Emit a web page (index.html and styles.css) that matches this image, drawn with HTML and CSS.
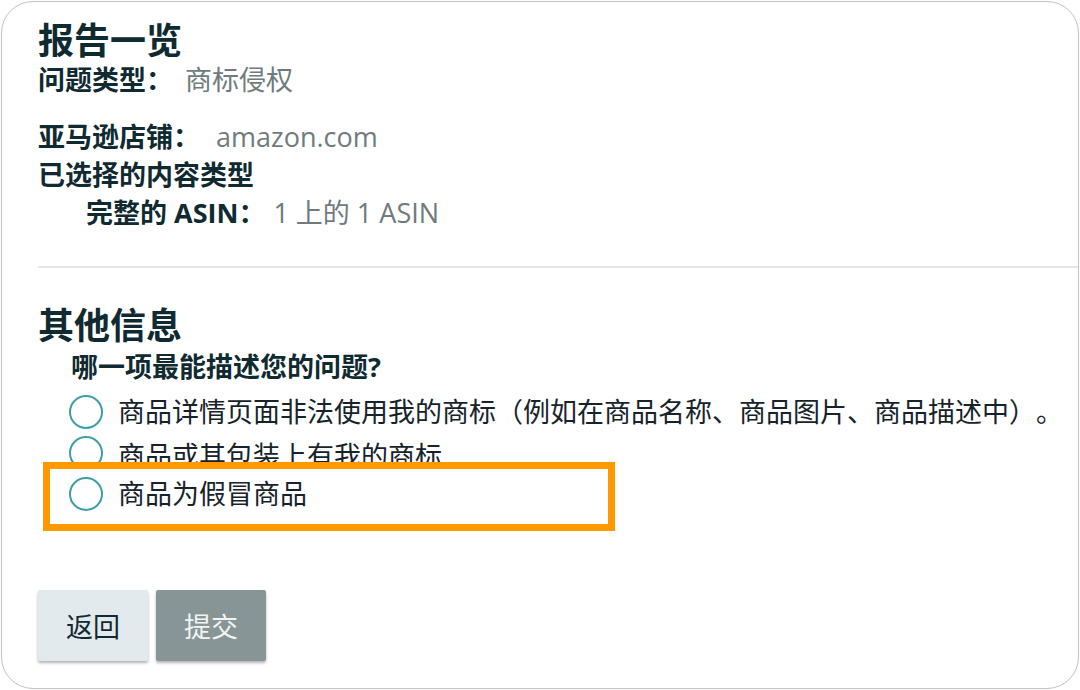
FILE: index.html
```html
<!DOCTYPE html>
<html lang="zh-CN">
<head>
<meta charset="utf-8">
<title>报告一览</title>
<link rel="stylesheet" href="styles.css">
</head>
<body>
<div class="frame">
  <h1 class="title">报告一览</h1>
  <div class="field"><span class="label">问题类型：</span><span class="value v1">商标侵权</span></div>
  <div class="field gap-top"><span class="label">亚马逊店铺：</span><span class="value v2">amazon.com</span></div>
  <div class="field"><span class="label">已选择的内容类型</span></div>
  <div class="field indent"><span class="label">完整的 ASIN：</span><span class="value v3">1 上的 1 ASIN</span></div>

  <div class="divider"></div>

  <h1 class="title title2">其他信息</h1>
  <div class="question">哪一项最能描述您的问题?</div>
  <div class="option first"><span class="radio"></span><span class="opt-text">商品详情页面非法使用我的商标（例如在商品名称、商品图片、商品描述中）。</span></div>
  <div class="option second"><span class="radio"></span><span class="opt-text">商品或其包装上有我的商标.</span></div>
  <div class="highlight">
    <div class="option"><span class="radio"></span><span class="opt-text">商品为假冒商品</span></div>
  </div>

  <div class="buttons">
    <button class="btn btn-back">返回</button>
    <button class="btn btn-submit">提交</button>
  </div>
</div>
</body>
</html>
```

FILE: styles.css
```css
html, body {
  margin: 0;
  padding: 0;
  background: #ffffff;
}

body {
  font-family: "Open Sans", "Noto Sans CJK SC", sans-serif;
  color: #0f2a30;
  text-spacing-trim: space-all;
}

.frame {
  margin: 1px;
  height: 688px;
  box-sizing: border-box;
  border: 1.5px solid #c2c2c2;
  border-radius: 32px;
  padding: 19px 0 0 36px;
  overflow: hidden;
  background: #ffffff;
}

.title {
  margin: 0;
  font-size: 36px;
  line-height: 40px;
  font-weight: 700;
  color: #0f2a30;
}

.title2 {
  margin-top: 38px;
}

.field {
  display: flex;
  align-items: center;
  height: 38px;
  font-size: 27px;
  line-height: 38px;
}

.gap-top {
  margin-top: 19px;
}

.indent {
  padding-left: 48px;
}

.label {
  font-weight: 700;
  color: #0f2a30;
}

.value {
  color: #6f7b7d;
  font-weight: 400;
}

.v1 { margin-left: 12px; }
.v2 { margin-left: 16px; }
.v3 { margin-left: 8px; }

.divider {
  margin-top: 34px;
  height: 2px;
  background: #e6e6e6;
}

.question {
  margin-top: 2px;
  padding-left: 33px;
  font-size: 27px;
  line-height: 38px;
  font-weight: 700;
  color: #0f2a30;
}

.option {
  display: flex;
  align-items: center;
  gap: 15px;
  height: 41px;
  padding-left: 31px;
  font-size: 27px;
  color: #16232b;
}

.option.first {
  margin-top: 5px;
}

.option.second .opt-text {
  padding-top: 6px;
}

.radio {
  flex: none;
  width: 34px;
  height: 34px;
  box-sizing: border-box;
  border: 2px solid #3d9ea7;
  border-radius: 50%;
  background: #ffffff;
}

.opt-text {
  white-space: nowrap;
  line-height: 41px;
}

.highlight {
  position: relative;
  margin: -11px 0 0 5px;
  width: 572px;
  box-sizing: border-box;
  border: 7px solid #ff9900;
  background: #ffffff;
  padding: 4px 0 10px 0;
}

.highlight .option {
  padding-left: 19px;
}

.buttons {
  display: flex;
  gap: 8px;
  margin-top: 59px;
}

.btn {
  width: 110px;
  height: 71px;
  border: none;
  border-radius: 2px;
  font-family: "Open Sans", "Noto Sans CJK SC", sans-serif;
  font-size: 27px;
  box-shadow: 0 2px 3px rgba(0, 0, 0, 0.3);
  cursor: pointer;
}

.btn-back {
  background: #e3eaed;
  color: #0f2a30;
}

.btn-submit {
  background: #879596;
  color: #f2f4f4;
}
```
